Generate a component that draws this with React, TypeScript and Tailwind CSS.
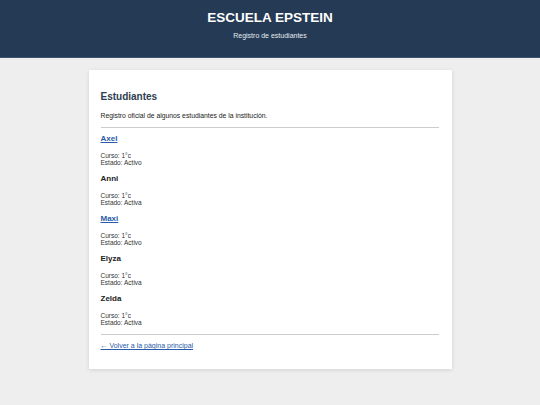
const students = [
  { name: "Axel", estado: "Activo", link: true },
  { name: "Anni", estado: "Activa", link: false },
  { name: "Maxi", estado: "Activo", link: true },
  { name: "Elyza", estado: "Activa", link: false },
  { name: "Zelda", estado: "Activa", link: false },
];

export default function App() {
  return (
    <div className="min-h-screen bg-[#eeeeee] font-['Liberation_Sans',Arial,sans-serif] text-[#333333]">
      {/* Header */}
      <header className="h-[58px] bg-[#243a55] border-b border-[#3f5470] text-center text-white pt-[10px]">
        <h1 className="text-[13.5px] leading-[16px] font-bold">ESCUELA EPSTEIN</h1>
        <p className="mt-[5px] text-[7px] leading-[9px] text-[#e6ebf1]">Registro de estudiantes</p>
      </header>

      {/* Card */}
      <main className="mx-auto mt-[12px] w-[363px] bg-white px-[12px] pt-[20px] pb-[19px] shadow-[0_1px_4px_rgba(0,0,0,0.12)]">
        <h2 className="text-[10px] leading-[14px] font-bold text-[#2c3e50]">Estudiantes</h2>
        <p className="mt-[7px] text-[6.8px] leading-[9px] text-[#222222]">
          Registro oficial de algunos estudiantes de la institución.
        </p>
        <hr className="mt-[7px] border-0 border-t border-[#cccccc] mr-[1px]" />

        <ul className="pt-[6px]">
          {students.map((s) => (
            <li key={s.name} className="pb-[8px]">
              {s.link ? (
                <a href="#" className="block text-[8px] leading-[10px] font-bold text-[#2a5aa8] underline">
                  {s.name}
                </a>
              ) : (
                <h3 className="text-[8px] leading-[10px] font-bold text-[#222222]">{s.name}</h3>
              )}
              <p className="mt-[8px] text-[6.5px] leading-[7px]">Curso: 1°c</p>
              <p className="text-[6.5px] leading-[7px]">Estado: {s.estado}</p>
            </li>
          ))}
        </ul>

        <hr className="border-0 border-t border-[#cccccc] mr-[1px]" />
        <a href="#" className="mt-[6px] block text-[7px] leading-[9px] text-[#2a5aa8] underline">
          ← Volver a la página principal
        </a>
      </main>
    </div>
  );
}
